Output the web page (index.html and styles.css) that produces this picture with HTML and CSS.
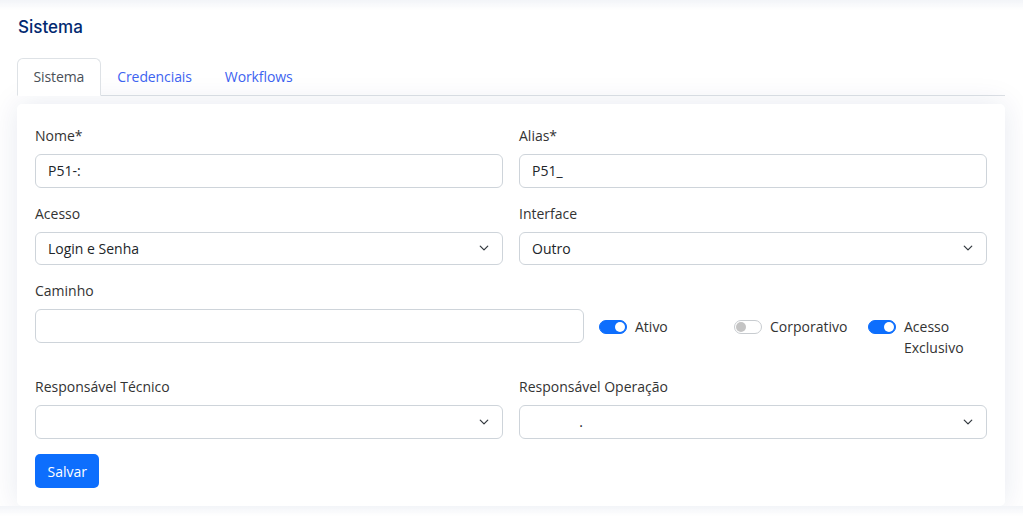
FILE: index.html
```html
<!DOCTYPE html>
<html lang="pt-BR">
<head>
  <meta charset="UTF-8">
  <meta name="viewport" content="width=device-width, initial-scale=1.0">
  <title>Sistema</title>
  <link rel="stylesheet" href="styles.css">
</head>
<body>
  <div class="page">
    <h5 class="card-title">Sistema</h5>

    <ul class="nav-tabs">
      <li><a class="nav-link active" href="#">Sistema</a></li>
      <li><a class="nav-link" href="#">Credenciais</a></li>
      <li><a class="nav-link" href="#">Workflows</a></li>
    </ul>

    <div class="card">
      <form class="form-grid">
        <div class="field">
          <label for="nome">Nome*</label>
          <input type="text" id="nome" class="form-control" value="P51-:">
        </div>
        <div class="field">
          <label for="alias">Alias*</label>
          <input type="text" id="alias" class="form-control" value="P51_">
        </div>

        <div class="field">
          <label for="acesso">Acesso</label>
          <select id="acesso" class="form-select">
            <option>Login e Senha</option>
          </select>
        </div>
        <div class="field">
          <label for="interface">Interface</label>
          <select id="interface" class="form-select">
            <option>Outro</option>
          </select>
        </div>

        <div class="path-row">
          <div class="field">
            <label for="caminho">Caminho</label>
            <input type="text" id="caminho" class="form-control">
          </div>
          <div class="form-check">
            <span class="switch on"></span>
            <span class="check-label">Ativo</span>
          </div>
          <div class="form-check">
            <span class="switch"></span>
            <span class="check-label">Corporativo</span>
          </div>
          <div class="form-check">
            <span class="switch on"></span>
            <span class="check-label">Acesso Exclusivo</span>
          </div>
        </div>

        <div class="field">
          <label for="resp-tec">Responsável Técnico</label>
          <select id="resp-tec" class="form-select">
            <option></option>
          </select>
        </div>
        <div class="field">
          <label for="resp-op">Responsável Operação</label>
          <select id="resp-op" class="form-select">
            <option>&nbsp;&nbsp;&nbsp;&nbsp;&nbsp;&nbsp;&nbsp;&nbsp;&nbsp;&nbsp;&nbsp;&nbsp;&nbsp;.</option>
          </select>
        </div>

        <div class="actions">
          <button type="button" class="btn">Salvar</button>
        </div>
      </form>
    </div>
  </div>
</body>
</html>
```

FILE: styles.css
```css
body {
  margin: 0;
  font-family: "Open Sans", "Liberation Sans", sans-serif;
  font-size: 14px;
  color: #333;
  background: linear-gradient(to bottom, rgba(1, 41, 112, 0.05), rgba(255, 255, 255, 0) 10px) #fff;
}
.page {
  padding: 0 18px 0 17px;
}
.card-title {
  margin: 16px 0 20px 1px;
  font-family: Inter, "Open Sans", sans-serif;
  font-size: 17px;
  line-height: 22px;
  font-weight: 500;
  color: #012970;
}
.nav-tabs {
  display: flex;
  list-style: none;
  margin: 0;
  padding: 0;
  border-bottom: 1px solid #dee2e6;
}
.nav-link {
  display: block;
  padding: 8px 15.5px;
  line-height: 20px;
  letter-spacing: -0.1px;
  border: 1px solid transparent;
  border-radius: 6px 6px 0 0;
  margin-bottom: -1px;
  color: #3d63f0;
  text-decoration: none;
}
.nav-link.active {
  color: #495057;
  background-color: #fff;
  border-color: #dee2e6 #dee2e6 #fff;
}
.card {
  margin-top: 8px;
  background-color: #fff;
  border-radius: 5px;
  box-shadow: 0 0 30px rgba(1, 41, 112, 0.1);
  padding: 21px 18px 18px;
}
.form-grid {
  display: grid;
  grid-template-columns: 1fr 1fr;
  column-gap: 16px;
  row-gap: 15px;
}
.field label {
  display: block;
  line-height: 21px;
  margin-bottom: 8px;
}
.form-control,
.form-select {
  display: block;
  width: 100%;
  box-sizing: border-box;
  height: 33.5px;
  padding: 0 12px;
  font-family: inherit;
  font-size: 14px;
  color: #212529;
  background-color: #fff;
  border: 1px solid #ced4da;
  border-radius: 6px;
}
.form-select {
  appearance: none;
  padding-right: 36px;
  background-image: url("data:image/svg+xml,%3csvg xmlns='http://www.w3.org/2000/svg' viewBox='0 0 16 16'%3e%3cpath fill='none' stroke='%23343a40' stroke-linecap='round' stroke-linejoin='round' stroke-width='2' d='m2 5 6 6 6-6'/%3e%3c/svg%3e");
  background-repeat: no-repeat;
  background-position: right 12px center;
  background-size: 12px 10px;
}
.path-row {
  grid-column: 1 / -1;
  display: grid;
  grid-template-columns: 549px 120px 119px 1fr;
  column-gap: 15px;
  margin-bottom: 3px;
}
.form-check {
  display: flex;
  align-items: flex-start;
  padding-top: 36px;
  line-height: 21px;
}
.switch {
  flex: none;
  position: relative;
  box-sizing: border-box;
  width: 28px;
  height: 14px;
  margin: 3.5px 8px 0 0;
  border-radius: 7px;
  border: 1px solid #c8ccd0;
  background-color: #fff;
}
.switch::after {
  content: "";
  position: absolute;
  top: 1px;
  left: 1px;
  width: 10px;
  height: 10px;
  border-radius: 50%;
  background-color: #c4c4c4;
}
.switch.on {
  background-color: #0d6efd;
  border-color: #0d6efd;
}
.switch.on::after {
  left: 15px;
  background-color: #fff;
}
.actions {
  grid-column: 1 / -1;
  padding-top: 0.5px;
}
.btn {
  height: 34px;
  padding: 0 12.5px;
  font-family: inherit;
  font-size: 14px;
  color: #fff;
  background-color: #0d6efd;
  border: none;
  border-radius: 5px;
  cursor: pointer;
}
.btn:hover {
  background-color: #0b5ed7;
}
```
